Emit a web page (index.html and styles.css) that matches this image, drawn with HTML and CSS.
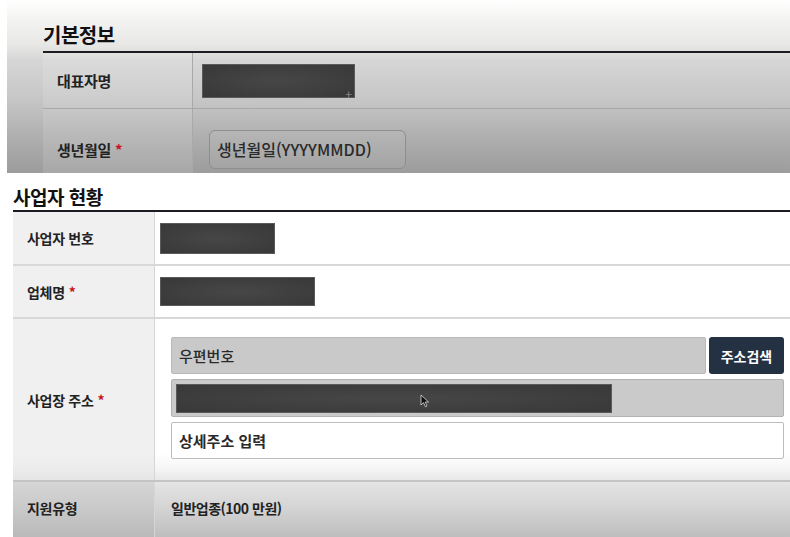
FILE: index.html
```html
<!DOCTYPE html>
<html lang="ko">
<head>
  <meta charset="UTF-8">
  <meta name="viewport" content="width=device-width, initial-scale=1.0">
  <title>기본정보 / 사업자 현황</title>
  <link rel="stylesheet" href="styles.css">
</head>
<body>
  <!-- 기본정보 -->
  <section class="panel basic">
    <h2 class="title">기본정보</h2>
    <div class="form-table">
      <div class="row row-name">
        <div class="label">대표자명</div>
        <div class="value">
          <div class="masked masked-name"><span class="cursor-plus">+</span></div>
        </div>
      </div>
      <div class="row row-birth">
        <div class="label">생년월일 <span class="req">*</span></div>
        <div class="value">
          <div class="input birth">생년월일(YYYYMMDD)</div>
        </div>
      </div>
    </div>
  </section>

  <!-- 사업자 현황 -->
  <section class="panel business">
    <h2 class="title">사업자 현황</h2>
    <div class="form-table">
      <div class="row row-bizno">
        <div class="label">사업자 번호</div>
        <div class="value">
          <div class="masked masked-bizno"></div>
        </div>
      </div>
      <div class="row row-company">
        <div class="label">업체명 <span class="req">*</span></div>
        <div class="value">
          <div class="masked masked-company"></div>
        </div>
      </div>
      <div class="row row-address">
        <div class="label">사업장 주소 <span class="req">*</span></div>
        <div class="value address">
          <div class="zip-line">
            <div class="input zip">우편번호</div>
            <button class="btn-search">주소검색</button>
          </div>
          <div class="input addr">
            <div class="masked masked-addr">
              <svg class="pointer" width="10" height="14" viewBox="0 0 10 14">
                <path d="M1 1 L1 11 L3.5 8.6 L5.4 12.8 L7 12 L5.2 8 L8.6 8 Z" fill="#111" stroke="#ddd" stroke-width="0.8"/>
              </svg>
            </div>
          </div>
          <div class="input detail">상세주소 입력</div>
        </div>
      </div>
      <div class="row row-type">
        <div class="label">지원유형</div>
        <div class="value">일반업종(100 만원)</div>
      </div>
    </div>
  </section>
</body>
</html>
```

FILE: styles.css
```css
/* 공통 */
body {
  margin: 0;
  width: 790px;
  height: 537px;
  overflow: hidden;
  background: #fff;
  font-family: "Noto Sans CJK KR", "Noto Sans", sans-serif;
  color: #222;
}
.panel {
  overflow: hidden;
}
.title {
  margin: 0;
  font-weight: 700;
  letter-spacing: -0.5px;
  color: #111;
}
.form-table {
  border-top: 2px solid #1c1c22;
}
.row {
  display: grid;
  grid-template-columns: 150px 1fr;
  box-sizing: border-box;
}
.label {
  display: flex;
  align-items: center;
  padding-left: 14px;
  font-size: 14px;
  font-weight: 700;
  letter-spacing: -0.3px;
}
.req {
  color: #c8141e;
  margin-left: 4px;
}
.value {
  display: flex;
  align-items: center;
}
.masked {
  background: radial-gradient(ellipse at center, #474747 0%, #383838 100%);
  border: 1px solid #5a5a5a;
  box-sizing: border-box;
  position: relative;
}

/* 기본정보 */
.basic {
  margin-left: 7px;
  height: 173px;
  padding: 22px 0 0 36px;
  box-sizing: border-box;
  background: linear-gradient(to bottom, #ffffff 0px, #f3f3f1 20px, #e7e7e5 45px, #d6d6d6 60px, #c6c6c6 100px, #b0b0b0 135px, #9c9c9c 173px);
}
.basic .title {
  font-size: 20px;
  line-height: 26px;
  margin-bottom: 3px;
}
.basic .label {
  background: rgba(255, 255, 255, 0.12);
  border-right: 1px solid #a9a9a9;
  font-size: 15px;
}
.basic .row-name {
  height: 56px;
  border-bottom: 1px solid #a8a8a8;
}
.basic .row-birth {
  height: 80px;
}
.basic .value {
  padding-left: 9px;
}
.masked-name {
  width: 153px;
  height: 34px;
}
.cursor-plus {
  position: absolute;
  right: 2px;
  bottom: -3px;
  font-size: 12px;
  color: #888;
  line-height: 1;
}
.input {
  box-sizing: border-box;
  display: flex;
  align-items: center;
  padding-left: 7px;
  font-size: 15px;
  font-weight: 500;
  color: #2a2a2a;
}
.birth {
  margin-left: 7px;
  width: 197px;
  height: 39px;
  border: 1px solid #8e8e8e;
  border-radius: 6px;
  background: rgba(255, 255, 255, 0.06);
  font-size: 16px;
}

/* 사업자 현황 */
.business {
  margin-left: 13px;
  height: 364px;
  padding-top: 12px;
  box-sizing: border-box;
  background: linear-gradient(to bottom, #ffffff 0px, #ffffff 280px, #f6f6f6 295px, #e2e2e2 312px, #d4d4d4 335px, #bebebe 364px);
}
.business .title {
  font-size: 19px;
  line-height: 24px;
  margin-bottom: 1px;
}
.business .row {
  grid-template-columns: 142px 1fr;
  border-bottom: 2px solid #d8d8d8;
}
.business .label {
  background: rgba(228, 228, 228, 0.55);
  border-right: 1px solid #d6d6d6;
}
.business .value {
  padding-left: 5px;
}
.row-bizno {
  height: 54px;
}
.row-company {
  height: 53px;
}
.masked-bizno {
  width: 115px;
  height: 31px;
}
.masked-company {
  width: 155px;
  height: 29px;
}
.row-address {
  height: 163px;
}
.business .row-address {
  border-bottom-color: #c4c4c4;
}
.business .value.address {
  flex-direction: column;
  align-items: stretch;
  justify-content: flex-start;
  gap: 5px;
  padding: 18px 6px 0 16px;
}
.zip-line {
  display: flex;
  gap: 3px;
  height: 37px;
}
.zip {
  flex: 1;
  background: #c9c9c9;
  border: 1px solid #b9b9b9;
  border-radius: 2px;
}
.btn-search {
  width: 75px;
  border: none;
  border-radius: 3px;
  background: #233142;
  color: #fff;
  font-family: inherit;
  font-size: 14px;
  font-weight: 700;
  padding: 0;
}
.addr {
  height: 38px;
  background: #cacaca;
  border: 1px solid #b3b3b3;
  border-radius: 2px;
  padding-left: 4px;
}
.masked-addr {
  width: 436px;
  height: 29px;
}
.pointer {
  position: absolute;
  left: 243px;
  top: 9px;
}
.detail {
  height: 37px;
  background: #fff;
  border: 1px solid #bdbdbd;
  border-radius: 2px;
  font-weight: 700;
}
.row-type {
  height: 60px;
}
.business .row-type .label {
  background: rgba(170, 170, 170, 0.25);
}
.row-type .value {
  padding-left: 16px !important;
  padding-bottom: 6px;
  font-size: 14px;
  font-weight: 700;
  letter-spacing: -0.5px;
}
.row-type .label {
  padding-bottom: 6px;
}
```
